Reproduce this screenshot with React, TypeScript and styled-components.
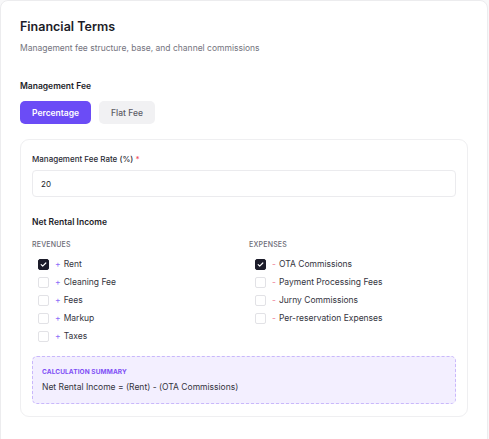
import styled, { createGlobalStyle } from 'styled-components';

const GlobalStyle = createGlobalStyle`
  html, body {
    margin: 0;
    padding: 0;
    background: #f8f8f9;
    font-family: Inter, "Noto Sans", sans-serif;
    -webkit-font-smoothing: antialiased;
  }
`;

const Panel = styled.section`
  box-sizing: border-box;
  width: 488px;
  min-height: 460px;
  background: #ffffff;
  border: 1px solid #ececee;
  border-radius: 8px;
  padding: 18px 19px;
`;

const Title = styled.h1`
  margin: 0;
  font-size: 12.5px;
  font-weight: 600;
  color: #1c1c28;
  line-height: 16px;
`;

const Subtitle = styled.p`
  margin: 7px 0 0 0;
  font-size: 8.5px;
  color: #74747e;
  line-height: 12px;
`;

const SectionLabel = styled.h2`
  margin: 26px 0 0 0;
  font-size: 8.5px;
  font-weight: 600;
  color: #1c1c28;
  line-height: 12px;
`;

const ToggleRow = styled.div`
  display: flex;
  gap: 8px;
  margin-top: 9px;
`;

const ToggleButton = styled.button<{ $active?: boolean }>`
  height: 23px;
  padding: 0 12px;
  border: none;
  border-radius: 5px;
  font-family: inherit;
  font-size: 8.5px;
  font-weight: ${(p) => (p.$active ? 600 : 500)};
  background: ${(p) => (p.$active ? '#6b4cf6' : '#f1f1f3')};
  color: ${(p) => (p.$active ? '#ffffff' : '#5c5c66')};
  cursor: pointer;
`;

const Card = styled.div`
  margin-top: 15px;
  border: 1px solid #efeff1;
  border-radius: 9px;
  padding: 13px 11px 12px 11px;
`;

const FieldLabel = styled.label`
  display: block;
  font-size: 8px;
  font-weight: 500;
  color: #2a2a34;
  line-height: 12px;
`;

const Required = styled.span`
  color: #ef4f5f;
`;

const RateInput = styled.input`
  box-sizing: border-box;
  display: block;
  width: 100%;
  height: 27px;
  margin-top: 5px;
  padding: 0 8px;
  border: 1px solid #ebebee;
  border-radius: 4px;
  font-family: inherit;
  font-size: 8px;
  color: #1c1c28;
  outline: none;
`;

const SubHeading = styled.h3`
  margin: 19px 0 0 0;
  font-size: 8.5px;
  font-weight: 600;
  color: #1c1c28;
  line-height: 12px;
`;

const Columns = styled.div`
  display: grid;
  grid-template-columns: 1fr 1fr;
  column-gap: 10px;
  margin-top: 12px;
`;

const ColumnTitle = styled.div`
  font-size: 7px;
  font-weight: 500;
  letter-spacing: 0.2px;
  color: #6c6c76;
  line-height: 10px;
  margin-bottom: 5px;
`;

const CheckRow = styled.label`
  display: flex;
  align-items: center;
  height: 18px;
  padding-left: 6px;
  font-size: 8.5px;
  color: #34343e;
  cursor: pointer;
`;

const Box = styled.span<{ $checked?: boolean }>`
  box-sizing: border-box;
  display: inline-flex;
  align-items: center;
  justify-content: center;
  width: 11px;
  height: 11px;
  border-radius: 2px;
  border: 1px solid ${(p) => (p.$checked ? '#1c1c2a' : '#e2e2e6')};
  background: ${(p) => (p.$checked ? '#1c1c2a' : '#ffffff')};
  margin-right: 6px;
`;

const Sign = styled.span<{ $kind: 'plus' | 'minus' }>`
  color: ${(p) => (p.$kind === 'plus' ? '#8a6cf8' : '#ee7c97')};
  margin-right: 3px;
`;

const Summary = styled.div`
  margin-top: 11px;
  border: 1px dashed #c9b8fb;
  border-radius: 5px;
  background: #f3efff;
  padding: 10px 9px 10px 9px;
`;

const SummaryTitle = styled.div`
  font-size: 6.5px;
  font-weight: 700;
  color: #8050f5;
  letter-spacing: 0.1px;
  line-height: 10px;
`;

const SummaryText = styled.div`
  margin-top: 4px;
  font-size: 8.5px;
  color: #33333d;
  line-height: 12px;
`;

const Check = () => (
  <svg width="7" height="7" viewBox="0 0 12 12" fill="none">
    <path d="M2 6.3l2.6 2.6L10 3.4" stroke="#fff" strokeWidth="2" strokeLinecap="round" strokeLinejoin="round" />
  </svg>
);

type Item = { label: string; checked: boolean };

const revenues: Item[] = [
  { label: 'Rent', checked: true },
  { label: 'Cleaning Fee', checked: false },
  { label: 'Fees', checked: false },
  { label: 'Markup', checked: false },
  { label: 'Taxes', checked: false },
];

const expenses: Item[] = [
  { label: 'OTA Commissions', checked: true },
  { label: 'Payment Processing Fees', checked: false },
  { label: 'Jurny Commissions', checked: false },
  { label: 'Per-reservation Expenses', checked: false },
];

const ItemList = ({ items, kind }: { items: Item[]; kind: 'plus' | 'minus' }) => (
  <>
    {items.map((item) => (
      <CheckRow key={item.label}>
        <Box $checked={item.checked}>{item.checked && <Check />}</Box>
        <Sign $kind={kind}>{kind === 'plus' ? '+' : '-'}</Sign>
        {item.label}
      </CheckRow>
    ))}
  </>
);

export default function App() {
  const formula = `Net Rental Income = (${revenues
    .filter((r) => r.checked)
    .map((r) => r.label)
    .join(' + ')}) - (${expenses
    .filter((e) => e.checked)
    .map((e) => e.label)
    .join(' + ')})`;

  return (
    <>
      <GlobalStyle />
      <Panel>
        <Title>Financial Terms</Title>
        <Subtitle>Management fee structure, base, and channel commissions</Subtitle>

        <SectionLabel>Management Fee</SectionLabel>
        <ToggleRow>
          <ToggleButton $active>Percentage</ToggleButton>
          <ToggleButton>Flat Fee</ToggleButton>
        </ToggleRow>

        <Card>
          <FieldLabel htmlFor="fee-rate">
            Management Fee Rate (%) <Required>*</Required>
          </FieldLabel>
          <RateInput id="fee-rate" type="text" defaultValue="20" />

          <SubHeading>Net Rental Income</SubHeading>
          <Columns>
            <div>
              <ColumnTitle>REVENUES</ColumnTitle>
              <ItemList items={revenues} kind="plus" />
            </div>
            <div>
              <ColumnTitle>EXPENSES</ColumnTitle>
              <ItemList items={expenses} kind="minus" />
            </div>
          </Columns>

          <Summary>
            <SummaryTitle>CALCULATION SUMMARY</SummaryTitle>
            <SummaryText>{formula}</SummaryText>
          </Summary>
        </Card>
      </Panel>
    </>
  );
}
